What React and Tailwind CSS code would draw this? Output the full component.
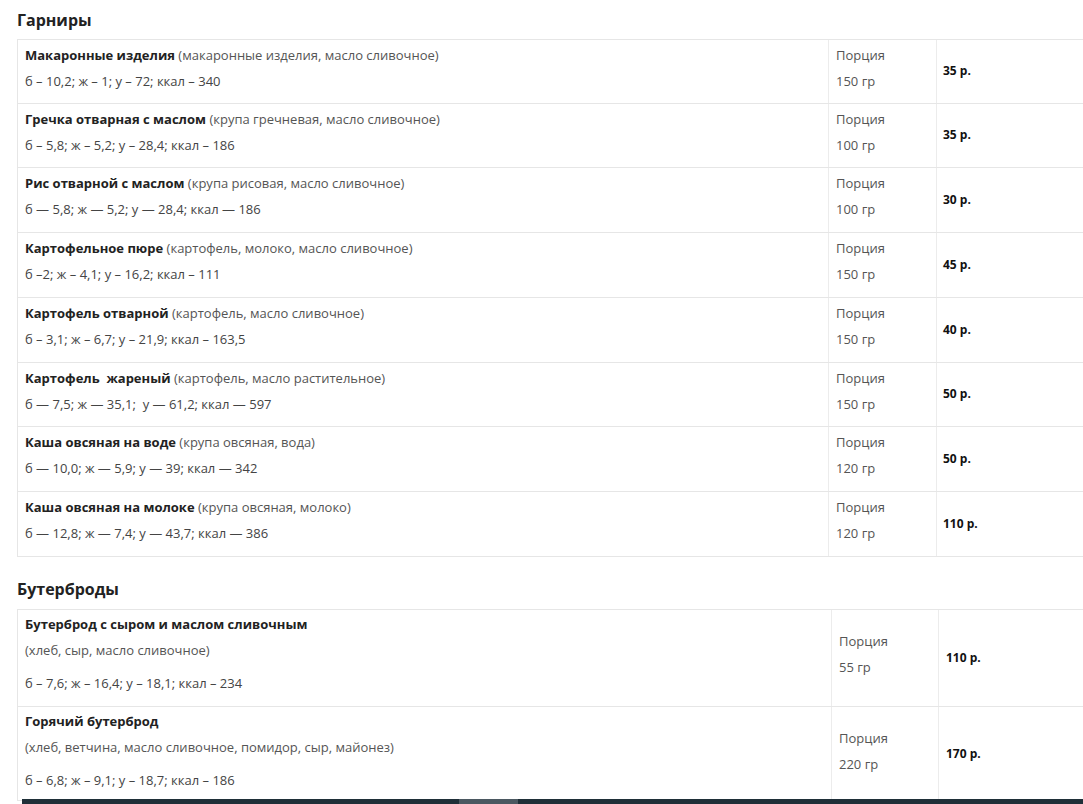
import React from "react";

const garnish = [
  ["Макаронные изделия", "(макаронные изделия, масло сливочное)", "б – 10,2; ж – 1; у – 72; ккал – 340", "150 гр", "35 р.", "h-[64px]"],
  ["Гречка отварная с маслом", "(крупа гречневая, масло сливочное)", "б – 5,8; ж – 5,2; у – 28,4; ккал – 186", "100 гр", "35 р.", "h-[64px]"],
  ["Рис отварной с маслом", "(крупа рисовая, масло сливочное)", "б — 5,8; ж — 5,2; у — 28,4; ккал — 186", "100 гр", "30 р.", "h-[65px]"],
  ["Картофельное пюре", "(картофель, молоко, масло сливочное)", "б –2; ж – 4,1; у – 16,2; ккал – 111", "150 гр", "45 р.", "h-[65px]"],
  ["Картофель отварной", "(картофель, масло сливочное)", "б – 3,1; ж – 6,7; у – 21,9; ккал – 163,5", "150 гр", "40 р.", "h-[65px]"],
  ["Картофель\u00a0 жареный", "(картофель, масло растительное)", "б — 7,5; ж — 35,1;\u00a0 у — 61,2; ккал — 597", "150 гр", "50 р.", "h-[64px]"],
  ["Каша овсяная на воде", "(крупа овсяная, вода)", "б — 10,0; ж — 5,9; у — 39; ккал — 342", "120 гр", "50 р.", "h-[65px]"],
  ["Каша овсяная на молоке", "(крупа овсяная, молоко)", "б — 12,8; ж — 7,4; у — 43,7; ккал — 386", "120 гр", "110 р.", "h-[65px]"],
];

const sandwiches = [
  ["Бутерброд с сыром и маслом сливочным", "(хлеб, сыр, масло сливочное)", "б – 7,6; ж – 16,4; у – 18,1; ккал – 234", "55 гр", "110 р.", "h-[97px]"],
  ["Горячий бутерброд", "(хлеб, ветчина, масло сливочное, помидор, сыр, майонез)", "б – 6,8; ж – 9,1; у – 18,7; ккал – 186", "220 гр", "170 р.", "h-[94px]"],
];

export default function App() {
  return (
    <div
      className="relative w-[1083px] h-[804px] overflow-hidden bg-white text-[13px] text-[#444]"
      style={{ fontFamily: '"Open Sans", "Noto Sans", sans-serif' }}
    >
      <div className="pl-[17px]">
        <h2 className="h-[39px] pt-[7px] text-[16px] font-bold text-[#222] leading-[26px]">Гарниры</h2>
        <div className="border-t border-l border-[#e6e6e6]">
          {garnish.map((r, i) => (
            <div key={i} className={`flex ${r[5]} border-b border-[#e6e6e6]`}>
              <div className="w-[811px] shrink-0 border-r border-[#ececec] pl-[7px] pt-[5px] leading-[20px]">
                <div>
                  <span className="font-bold text-[#222]">{r[0]}</span>{" "}
                  <span className="text-[#555]">{r[1]}</span>
                </div>
                <div className="mt-[6px]">{r[2]}</div>
              </div>
              <div className="w-[108px] shrink-0 border-r border-[#ececec] pl-[7px] pt-[5px] leading-[20px] text-[#555]">
                <div>Порция</div>
                <div className="mt-[6px]">{r[3]}</div>
              </div>
              <div className="flex-1 flex items-center pl-[6px] pb-[1px] font-bold text-[12px] text-[#111]">
                {r[4]}
              </div>
            </div>
          ))}
        </div>
        <h2 className="h-[52px] pt-[19px] text-[16px] font-bold text-[#222] leading-[26px]">Бутерброды</h2>
        <div className="border-t border-l border-[#e6e6e6]">
          {sandwiches.map((r, i) => (
            <div key={i} className={`flex ${r[5]} border-b border-[#e6e6e6]`}>
              <div className="w-[814px] shrink-0 border-r border-[#ececec] pl-[7px] pt-[4px] leading-[20px]">
                <div className="font-bold text-[#222]">{r[0]}</div>
                <div className="mt-[6px] text-[#555]">{r[1]}</div>
                <div className="mt-[13px]">{r[2]}</div>
              </div>
              <div className="w-[107px] shrink-0 border-r border-[#ececec] pl-[7px] pt-[21px] leading-[20px] text-[#555]">
                <div>Порция</div>
                <div className="mt-[6px]">{r[3]}</div>
              </div>
              <div className="flex-1 flex items-center pl-[7px] font-bold text-[12px] text-[#111]">
                {r[4]}
              </div>
            </div>
          ))}
        </div>
      </div>
      <div className="absolute left-[22px] right-0 bottom-0 h-[5px] bg-[#1f2f38]">
        <div className="absolute left-[437px] top-0 h-[5px] w-[59px] bg-[#4b5861]" />
      </div>
    </div>
  );
}
